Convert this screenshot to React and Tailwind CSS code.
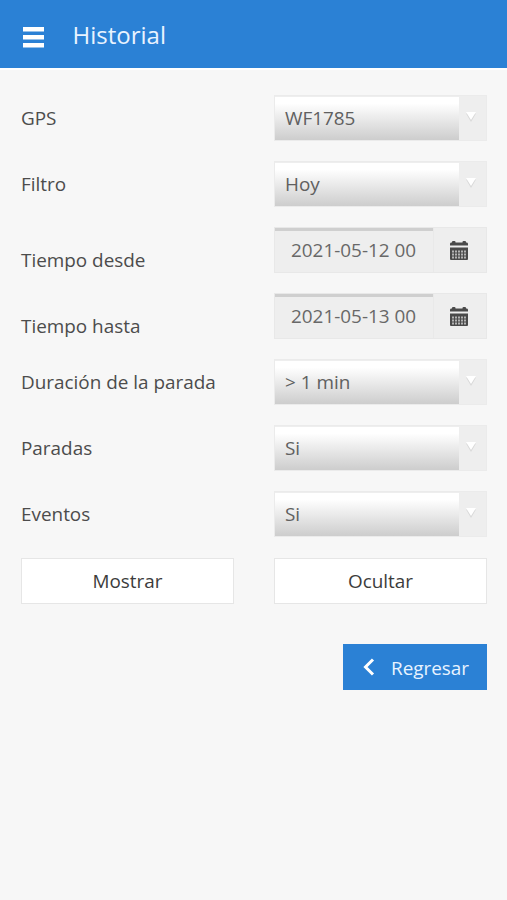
const LABEL = "w-[274px] shrink-0 pl-[21px] text-[18.9px] leading-[46px] text-[#4c4c4c]";

function Row({ label, low, children }) {
  return (
    <div className="flex h-[66px]">
      <div className={LABEL}>
        <div className={low ? "pt-[10px]" : ""}>{label}</div>
      </div>
      {children}
    </div>
  );
}

function Select({ value }) {
  return (
    <div className="flex h-[46px] w-[213px] border border-[#ebebeb] bg-[#eeeeee]">
      <div className="mt-px w-[184px] bg-gradient-to-b from-white from-15% to-[#cdcdcd] pl-[10px] text-[18.9px] leading-[42px] text-[#606060]">
        {value}
      </div>
      <svg className="mt-[14px] ml-[5px] h-[14px] w-[14px]" viewBox="0 0 14 14">
        <path d="M2 3.5H12L7 12Z" fill="#d8d8d8" />
        <path d="M2 2H12L7 10Z" fill="#ffffff" />
      </svg>
    </div>
  );
}

function CalendarIcon() {
  return (
    <svg className="h-[20px] w-[18px]" viewBox="0 0 18 20" fill="#4a4a4a">
      <path d="M0 5.5V4Q0 2.5 1 2.5H2V2Q2 1 3 1H4.5Q5.5 1 5.5 2V2.5H12.5V2Q12.5 1 13.5 1H15Q16 1 16 2V2.5H17Q18 2.5 18 4V5.5Z" />
      <path d="M0 7.5H18V19Q18 20 17 20H1Q0 20 0 19Z" />
      <path
        d="M2 11.5H16M2 14.5H16M2 17.5H16"
        stroke="#b4b4b4"
        strokeWidth="2"
        strokeDasharray="2 1"
      />
    </svg>
  );
}

function DateField({ value }) {
  return (
    <div className="flex h-[46px] w-[213px] border border-[#e8e8e8] bg-[#eeeeee]">
      <div className="w-[158px] border-t-[3px] border-[#cfcfcf] pl-[16px] text-[18.9px] leading-[38px] whitespace-nowrap text-[#686868]">
        {value}
      </div>
      <div className="flex flex-1 items-center border-l border-[#e9e9e9] pl-[16px]">
        <CalendarIcon />
      </div>
    </div>
  );
}

export default function App() {
  return (
    <div className="h-[900px] w-[507px] overflow-hidden bg-[#f7f7f7] font-['Open_Sans','Noto_Sans',sans-serif]">
      <header className="flex h-[68px] bg-[#2b81d5]">
        <svg className="mt-[27px] ml-[23px] h-[21px] w-[21px]" viewBox="0 0 21 21" fill="#ffffff">
          <rect width="21" height="4.5" />
          <rect y="8" width="21" height="4.5" />
          <rect y="16" width="21" height="4.5" />
        </svg>
        <h1 className="ml-[28.5px] text-[24px] leading-[69px] text-[#e8f3ff]">Historial</h1>
      </header>
      <div className="h-[2px] bg-white" />
      <main className="pt-[25px]">
        <Row label="GPS"><Select value="WF1785" /></Row>
        <Row label="Filtro"><Select value="Hoy" /></Row>
        <Row label="Tiempo desde" low><DateField value="2021-05-12 00" /></Row>
        <Row label="Tiempo hasta" low><DateField value="2021-05-13 00" /></Row>
        <Row label="Duración de la parada"><Select value="> 1 min" /></Row>
        <Row label="Paradas"><Select value="Si" /></Row>
        <Row label="Eventos"><Select value="Si" /></Row>
        <div className="flex gap-[40px] pt-px pl-[21px] text-[18.9px] leading-[44px] text-[#3c3c3c]">
          <button className="h-[46px] w-[213px] border border-[#e6e6e6] bg-white">Mostrar</button>
          <button className="h-[46px] w-[213px] border border-[#e6e6e6] bg-white">Ocultar</button>
        </div>
        <button className="mt-[40px] ml-[343px] flex h-[46px] w-[144px] bg-[#2b81d5] text-[18.9px] leading-[49px] text-[#e8f3ff]">
          <svg className="mt-[14px] ml-[19px] h-[18px] w-[13px]" viewBox="0 0 13 18">
            <path d="M11 1.5L3.5 9L11 16.5" fill="none" stroke="#ffffff" strokeWidth="3" />
          </svg>
          <span className="ml-[16px]">Regresar</span>
        </button>
      </main>
    </div>
  );
}
